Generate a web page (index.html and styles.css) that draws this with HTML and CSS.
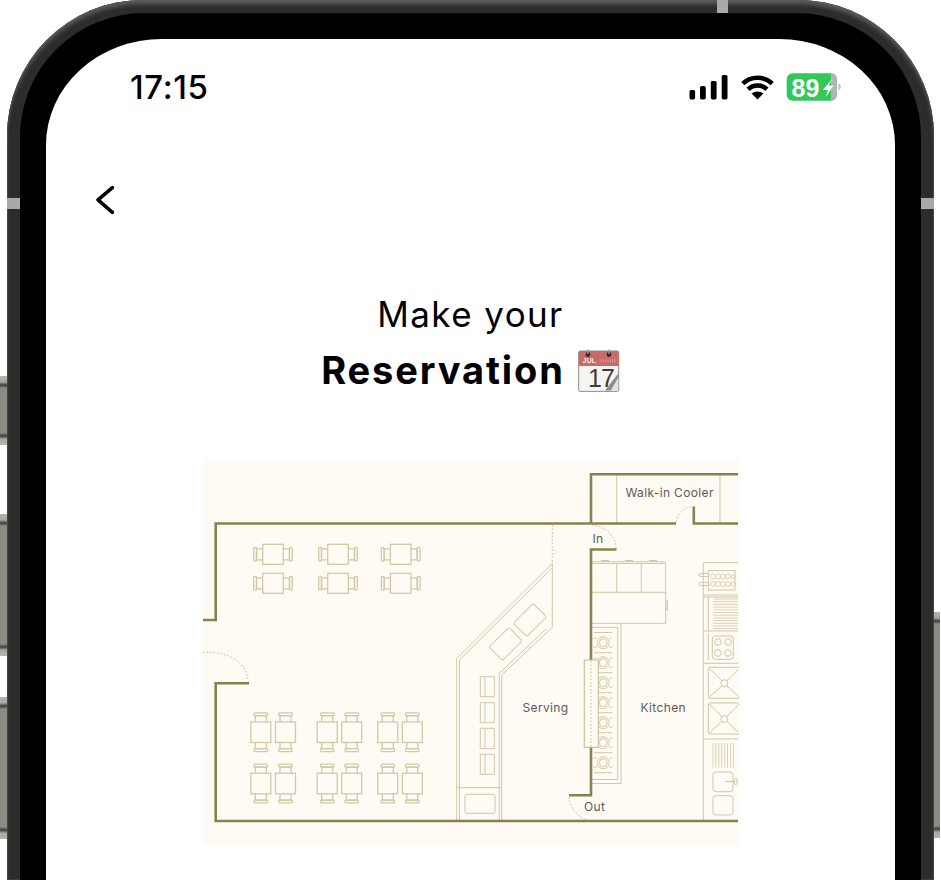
FILE: index.html
```html
<!DOCTYPE html>
<html lang="en">
<head>
<meta charset="utf-8">
<title>Make your Reservation</title>
<link rel="stylesheet" href="styles.css">
</head>
<body>
<div class="device">
  <span class="btn btn-l1"></span>
  <span class="btn btn-l2"></span>
  <span class="btn btn-l3"></span>
  <span class="btn btn-r1"></span>
  <span class="band band-top"></span>
  <span class="band band-left"></span>
  <span class="band band-right"></span>
  <div class="bezel">
    <main class="screen">
      <header class="status">
        <span class="time">17:15</span>
        <svg class="status-icons" width="152" height="32" viewBox="689 71 152 32">
          <rect x="689.5" y="90" width="5.6" height="9.4" rx="1.6"/>
          <rect x="700" y="86" width="5.8" height="13.4" rx="1.6"/>
          <rect x="710.8" y="81" width="5.8" height="18.4" rx="1.6"/>
          <rect x="721.7" y="75" width="5.8" height="24.4" rx="1.6"/>
          <path class="wifi" d="M742.8 83.6a21.5 21.5 0 0 1 29.4 0"/>
          <path class="wifi" d="M748 89.2a14 14 0 0 1 19 0"/>
          <path d="M751.6 93.6a9 9 0 0 1 11.8 0L757.5 99.6z"/>
          <rect class="batt" x="786.7" y="73.3" width="50" height="27.4" rx="6"/>
          <path class="batt-end" d="M831.7 73.3h-.7v27.4h.7a5 5 0 0 0 5-5v-17.4a5 5 0 0 0-5-5z"/>
          <path class="batt-nub" d="M838.3 83.2c1.6.4 2.600 1.800 2.600 3.600s-1 3.200-2.600 3.600z"/>
          <text class="batt-text" x="791.500" y="96.500">89</text>
          <path class="bolt" d="M833 78 822.700 90H828L825.500 97.500 833.500 85.500H828.500z"/>
        </svg>
      </header>

      <svg class="back" width="24" height="32" viewBox="93 184 24 32">
        <path d="M112.400 187.600 98 199.800l14.400 12.600"/>
      </svg>

      <h1 class="title">
        <span class="title-light">Make your</span>
        <span class="title-strong">Reservation
          <svg class="cal" width="42" height="43" viewBox="0 0 42 43">
            <rect class="cal-page" x="0.700" y="2" width="40" height="40.400" rx="1.500"/>
            <path class="cal-head" d="M.7 17V3.500A1.500 1.500 0 0 1 2.200 2h37a1.500 1.500 0 0 1 1.500 1.500V17z"/>
            <circle class="cal-hole" cx="10" cy="5.500" r="2.400"/>
            <circle class="cal-hole" cx="31" cy="5.500" r="2.400"/>
            <path class="cal-ring" d="M10 5V.5M31 5V.5"/>
            <text class="cal-month" x="4.500" y="13.500">JUL</text>
            <path class="cal-ticks" d="M23 12H38"/>
            <text class="cal-day" x="10" y="37.500">17</text>
            <path class="cal-shade" d="M27 41.500 40.200 24.500V29L33 41.500z"/>
            <path class="cal-curl" d="M33 41.500 40.200 29V40L39 41.500z"/>
          </svg>
        </span>
      </h1>

      <svg class="plan" width="536" height="387" viewBox="203 459 536 387">
        <defs>
          <g id="table">
            <rect x="-10.300" y="-10" width="20.600" height="20"/>
            <path d="M-10.300-5.500H-16.500V5.500H-10.300M10.300-5.500H16.500V5.500H10.300"/>
            <rect x="-19.300" y="-6.800" width="2.800" height="13.600" rx="1"/>
            <rect x="16.500" y="-6.800" width="2.800" height="13.600" rx="1"/>
          </g>
          <g id="burner">
            <circle r="6"/>
            <circle r="4"/>
            <path d="M-10-4.500H-6.200M-10 4.500H-6.200M6.200-4.500H9M6.200 4.500H9"/>
          </g>
          <g id="sink">
            <rect x="0" y="0" width="34" height="31" rx="2"/>
            <circle cx="16" cy="16" r="3.500"/>
            <path d="M1 1 13.500 13.500M31 1 18.500 13.500M1 30 13.500 18.500M31 30 18.500 18.500"/>
          </g>
        </defs>

        <rect class="plan-bg" x="203" y="459" width="536" height="387"/>

        <g class="thin">
          <g class="serving">
            <path d="M552.300 563.300V627.300L501.700 675V821M456.700 821V658.500L552.300 563.300"/>
            <path d="M459.500 821V660L552.300 567.500"/>
            <path d="M499.200 821V673.500L546 629"/>
            <path d="M457 787.700H501.700"/>
            <rect x="465" y="794.300" width="30" height="19" rx="2"/>
            <rect x="516" y="610.500" width="28" height="19" rx="2" transform="rotate(-45 530 620)"/>
            <rect x="491.700" y="634.500" width="28" height="19" rx="2" transform="rotate(-45 505.700 644)"/>
            <path d="M480.300 676.700H494.300V696.700H480.300ZM485 676.700V696.700"/>
            <path d="M480.300 702.700H494.300V722.700H480.300ZM485 702.700V722.700"/>
            <path d="M480.300 728.300H494.300V748.700H480.300ZM485 728.300V748.700"/>
            <path d="M480.300 754.300H494.300V774.300H480.300ZM485 754.300V774.300"/>
          </g>

          <path d="M616.700 474.300V523.500M720 474.300V523.500"/>

          <path d="M591 561.700H665.700M591 563.500H665.700V623.300H591M616.700 563.500V592.300M641.300 563.500V592.300M591 592.300H665.700"/>
          <path d="M601 560.500H609M625 560.500H633M649 560.500H657M605 560.500V562M629 560.500V562M653 560.500V562"/>
          <rect x="665.700" y="601" width="1.800" height="9"/>

          <path d="M621 623.300V783.500H591M591 627.300H617.700V779.500H591"/>
          <use href="#burner" x="603.300" y="642.700"/>
          <use href="#burner" x="603.300" y="662.700"/>
          <use href="#burner" x="603.300" y="682.700"/>
          <use href="#burner" x="603.300" y="702.700"/>
          <use href="#burner" x="603.300" y="722.700"/>
          <use href="#burner" x="603.300" y="742.700"/>
          <use href="#burner" x="603.300" y="762.700"/>
          <path d="M594 632.500H612M594 652.700H612M594 672.700H612M594 692.700H612M594 712.700H612M594 732.700H612M594 752.700H612M594 772.700H612"/>

          <path d="M703.300 562.700V821M703.300 562.700H738M703.300 595H738M703.300 631H738M703.300 663.300H738M703.300 739H738M708.300 597V631M708.300 634V660"/>
          <path d="M703.300 597H738"/>
          <rect x="708.300" y="570.700" width="26.700" height="19.300"/>
          <rect x="699" y="573.500" width="10" height="3" rx="1.500"/>
          <rect x="699" y="582.500" width="10" height="3" rx="1.500"/>
          <g class="fine">
            <circle cx="713" cy="576.500" r="2.500"/><circle cx="718" cy="576.500" r="2.500"/><circle cx="723" cy="576.500" r="2.500"/><circle cx="728" cy="576.500" r="2.500"/><circle cx="733" cy="576.500" r="2"/>
            <circle cx="713" cy="584" r="2.500"/><circle cx="718" cy="584" r="2.500"/><circle cx="723" cy="584" r="2.500"/><circle cx="728" cy="584" r="2.500"/><circle cx="733" cy="584" r="2"/>
            <path d="M713.300 599H738M713.300 601.700H738M713.300 604.400H738M713.300 607.100H738M713.300 609.800H738M713.300 612.500H738M713.300 615.200H738M713.300 617.900H738M713.300 620.600H738M713.300 623.300H738M713.300 626H738M713.300 628.700H738"/>
            <path d="M713 743V767.700M715.900 743V767.700M718.800 743V767.700M721.700 743V767.700M724.600 743V767.700M727.500 743V767.700M730.400 743V767.700M733.300 743V767.700"/>
          </g>
          <rect x="712.300" y="636" width="21" height="23.300" rx="3"/>
          <circle cx="718" cy="642" r="3.300"/><circle cx="728" cy="642" r="3.300"/><circle cx="718" cy="653" r="3.300"/><circle cx="728" cy="653" r="3.300"/>
          <use href="#sink" x="708.300" y="667.300"/>
          <use href="#sink" x="708.300" y="703"/>
          <rect x="713" y="772" width="20" height="19.700" rx="3"/>
          <rect x="713" y="795.700" width="20" height="19.300" rx="3"/>
          <path d="M725 781.500H735"/>
          <rect x="734.500" y="778.500" width="2.500" height="6" rx="1"/>
        </g>

        <g class="tables">
          <use href="#table" x="273" y="554.300"/><use href="#table" x="338" y="554.300"/><use href="#table" x="400.700" y="554.300"/>
          <use href="#table" x="273" y="583.300"/><use href="#table" x="338" y="583.300"/><use href="#table" x="400.700" y="583.300"/>
          <use href="#table" transform="translate(260.800 732.200) rotate(90)"/><use href="#table" transform="translate(285.500 732.200) rotate(90)"/>
          <use href="#table" transform="translate(327.200 732.200) rotate(90)"/><use href="#table" transform="translate(351.700 732.200) rotate(90)"/>
          <use href="#table" transform="translate(387.800 732.200) rotate(90)"/><use href="#table" transform="translate(412.300 732.200) rotate(90)"/>
          <use href="#table" transform="translate(260.800 783.500) rotate(90)"/><use href="#table" transform="translate(285.500 783.500) rotate(90)"/>
          <use href="#table" transform="translate(327.200 783.500) rotate(90)"/><use href="#table" transform="translate(351.700 783.500) rotate(90)"/>
          <use href="#table" transform="translate(387.800 783.500) rotate(90)"/><use href="#table" transform="translate(412.300 783.500) rotate(90)"/>
        </g>

        <g class="wall">
          <path d="M203 620H215.700V523.500H676"/>
          <path d="M591 523.500V474.300H738"/>
          <path d="M738 523.500H693.800V506.500"/>
          <path d="M616.500 549.500H591V795.300H569"/>
          <path d="M249 683.300H215.700V821H738"/>
        </g>

        <g class="dots">
          <path d="M203 652.500C228 651 247 662 248 680.500"/>
          <path d="M552.300 525V563"/>
          <path d="M592 525C606 526 616 537 616 548"/>
          <path d="M676 522C677 513 685 506.500 693 506.500"/>
          <path d="M569 797C570 810 580 820 591 820"/>
        </g>

        <rect class="pass" x="584.300" y="660" width="14" height="87.300"/>
        <path class="dots" d="M591 661V747"/>

        <text class="label" x="625.500" y="496.500">Walk-in Cooler</text>
        <text class="label" x="592.500" y="543">In</text>
        <text class="label" x="584" y="810.500">Out</text>
        <text class="label" x="522.500" y="711.500">Serving</text>
        <text class="label" x="640.500" y="711.500">Kitchen</text>
      </svg>
    </main>
  </div>
</div>
</body>
</html>
```

FILE: styles.css
```css
* { box-sizing: border-box; }

html, body {
  margin: 0;
  height: 880px;
  overflow: hidden;
  background: #fff;
}

body {
  padding: 0 7px;
  font-family: Inter, "Liberation Sans", sans-serif;
  color: #000;
}

.device {
  position: relative;
  width: 927px;
  height: 880px;
  padding: 13px 13px 0;
  background: #2d2c2a;
  border-radius: 136px 136px 0 0;
  box-shadow: inset 0 5px 4px -1px #5c5c5a, inset 0 0 0 1px #3d3d3b;
}

.bezel {
  height: 867px;
  padding: 26px 26px 0;
  background: #000;
  border-radius: 124px 124px 0 0;
}

.screen {
  height: 841px;
  background: #fff;
  border-radius: 116px 116px 0 0 / 106px 106px 0 0;
  overflow: hidden;
}

/* hardware on the edge of the frame */
.btn {
  position: absolute;
  width: 7px;
  background: linear-gradient(to bottom, #b4b4ae 0, #a8a8a2 6px, #3c3c3a 9px, #8b8b84 12px, #8b8b84 calc(100% - 12px), #3c3c3a calc(100% - 9px), #a8a8a2 calc(100% - 6px), #b4b4ae 100%);
}
.btn-l1 { left: -7px; top: 376px; height: 69px; }
.btn-l2 { left: -7px; top: 514px; height: 142px; }
.btn-l3 { left: -7px; top: 697px; height: 142px; }
.btn-r1 { right: -6px; top: 612px; height: 226px; width: 6px; }

.band {
  position: absolute;
  background: #a9a9a6;
}
.band-top { left: 710px; top: 0; width: 11px; height: 13px; }
.band-left { left: 0; top: 198px; width: 13px; height: 11px; }
.band-right { right: 0; top: 198px; width: 13px; height: 11px; }

/* status bar */
.status {
  display: flex;
  align-items: center;
  justify-content: space-between;
  height: 32px;
  margin-top: 32px;
  padding: 0 54px 0 84px;
}

.time {
  font-size: 33px;
  font-weight: 500;
  line-height: 32px;
  letter-spacing: 0.6px;
}

.status-icons { display: block; fill: #000; }
.wifi { fill: none; stroke: #000; stroke-width: 4.6; }
.batt { fill: #34c759; }
.batt-end { fill: #b4b4b4; }
.batt-nub { fill: #c4c4c4; }
.batt-text { fill: #fff; font-family: "Liberation Sans", sans-serif; font-size: 25px; font-weight: 700; }
.bolt { fill: #fff; }

.back {
  display: block;
  margin: 81px 0 0 47px;
  fill: none;
  stroke: #000;
  stroke-width: 3.6;
  stroke-linecap: round;
  stroke-linejoin: round;
}

/* heading */
.title {
  margin: 70px 0 0;
  font-weight: 400;
  text-align: center;
}

.title-light, .title-strong {
  display: flex;
  align-items: center;
  justify-content: center;
  height: 56px;
}

.title-light {
  font-size: 35px;
  letter-spacing: 1.4px;
}

.title-strong {
  gap: 13px;
  font-size: 38px;
  font-weight: 700;
  letter-spacing: 1.9px;
}

.cal { display: block; }
.cal-page { fill: #f4f4f2; stroke: #8d8d8d; stroke-width: 1; }
.cal-head { fill: #c86a68; }
.cal-hole { fill: #3a2c2c; }
.cal-ring { fill: none; stroke: #8aa0b0; stroke-width: 1.4; }
.cal-month { fill: #fbe9e6; font-family: "Liberation Sans", sans-serif; font-size: 7px; font-weight: 700; letter-spacing: 0; }
.cal-ticks { fill: none; stroke: #dc9d9a; stroke-width: 3; stroke-dasharray: 1 1.2; }
.cal-day { fill: #3c3c3c; font-family: "Liberation Sans", sans-serif; font-size: 25px; font-weight: 400; letter-spacing: -1px; }
.cal-shade { fill: #8c8c8a; }
.cal-curl { fill: #e2e2e0; }

/* floor plan */
.plan {
  display: block;
  margin: 61px 0 0 157px;
}

.plan-bg { fill: #fffaf4; }

.thin, .tables, .thin use, .tables use {
  fill: none;
  stroke: #cdc9a6;
  stroke-width: 1;
}
.tables, .tables use { stroke-width: 1.25; }
.fine { stroke-width: 0.8; }

.wall {
  fill: none;
  stroke: #86824f;
  stroke-width: 2.6;
}

.dots {
  fill: none;
  stroke: #bdb992;
  stroke-width: 1;
  stroke-dasharray: 1.5 2;
}

.pass {
  fill: #fffaf4;
  stroke: #bdb992;
  stroke-width: 1;
}

.label {
  fill: #5b5b59;
  font-size: 12px;
  letter-spacing: 0.35px;
}
```
